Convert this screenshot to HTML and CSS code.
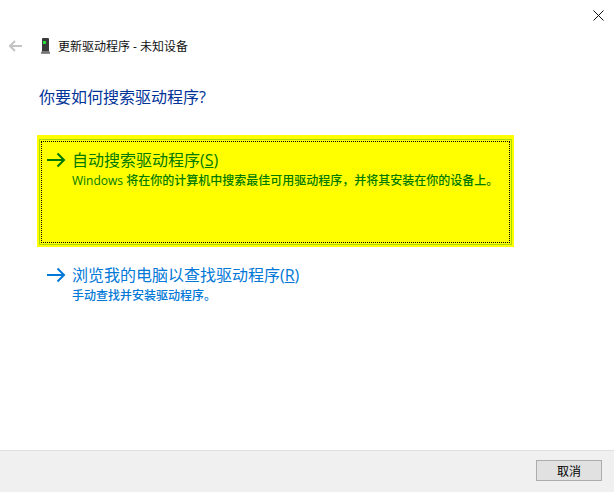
FILE: index.html
```html
<!DOCTYPE html>
<html lang="zh-CN">
<head>
    <meta charset="UTF-8">
    <title>更新驱动程序 - 未知设备</title>
    <link rel="stylesheet" href="styles.css">
</head>
<body>
    <div class="window">
        <div class="close-row">
            <svg class="close-icon" width="11" height="11" viewBox="0 0 11 11">
                <path d="M.5.5l10 10M10.500.5l-10 10" stroke="#111" stroke-width="1" fill="none"/>
            </svg>
        </div>

        <div class="title-row">
            <svg class="back-icon" width="13" height="12" viewBox="0 0 13 12">
                <path d="M6 1L1 6l5 5M1 6h12" stroke="#c4c4c4" stroke-width="2" fill="none"/>
            </svg>
            <svg class="device-icon" width="9" height="16" viewBox="0 0 9 16">
                <path d="M1.500 0h6L8 1v12l1 2.500H0L1 13V1z" fill="#3a3a3a"/>
                <path d="M1 13h7l1 2.500H0z" fill="#777"/>
                <rect x="2" y="3" width="3" height="3" fill="#22e03a"/>
            </svg>
            <span class="title-text">更新驱动程序 - 未知设备</span>
        </div>

        <h1 class="heading">你要如何搜索驱动程序?</h1>

        <div class="option option-selected">
            <div class="option-focus">
                <svg class="arrow" width="19" height="16" viewBox="0 0 19 16">
                    <path d="M0 8h17M10.500 1.500L17 8l-6.500 6.500" stroke="currentColor" stroke-width="2" fill="none"/>
                </svg>
                <div class="option-text">
                    <div class="option-title">自动搜索驱动程序(<u>S</u>)</div>
                    <div class="option-desc">Windows 将在你的计算机中搜索最佳可用驱动程序&#65292;并将其安装在你的设备上。</div>
                </div>
            </div>
        </div>

        <div class="option option-link">
            <svg class="arrow" width="19" height="16" viewBox="0 0 19 16">
                <path d="M0 8h17M10.500 1.500L17 8l-6.500 6.500" stroke="currentColor" stroke-width="2" fill="none"/>
            </svg>
            <div class="option-text">
                <div class="option-title">浏览我的电脑以查找驱动程序(<u>R</u>)</div>
                <div class="option-desc">手动查找并安装驱动程序。</div>
            </div>
        </div>

        <div class="footer">
            <button class="cancel-button">取消</button>
        </div>
    </div>
</body>
</html>
```

FILE: styles.css
```css
html, body {
    margin: 0;
    padding: 0;
    background: #fff;
}

body {
    font-family: "Open Sans", "Noto Sans CJK SC", sans-serif;
    font-size: 12px;
    overflow: hidden;
}

.window {
    width: 614px;
    height: 492px;
    display: flex;
    flex-direction: column;
}

.close-row {
    display: flex;
    justify-content: flex-end;
    padding: 10px 10px 0 0;
    height: 26px;
}

.close-icon { display: block; }

.title-row {
    display: flex;
    align-items: center;
    height: 20px;
    padding-left: 9px;
    color: #111;
}

.back-icon { margin-right: 19px; }
.device-icon { margin-right: 8px; }

.heading {
    margin: 29px 0 0 39px;
    font-size: 16px;
    font-weight: 400;
    line-height: 24px;
    color: #003399;
}

.option {
    display: flex;
    color: #0078d7;
}

.option-selected {
    box-sizing: border-box;
    width: 477px;
    height: 112px;
    margin: 26px 0 0 37px;
    padding: 2px;
    background: #ff0;
    color: #007a00;
    border-top: 2px solid #ff0;
}

.option-focus {
    flex: 1;
    display: flex;
    padding: 8px 0 0 7px;
    border: 1px solid #a8dc00;
    outline: 1px dotted #000;
    outline-offset: -3px;
}

.option-link {
    margin: 16px 0 0 47px;
}

.arrow {
    flex: none;
    margin: 4px 6px 0 0;
}

.option-title {
    font-size: 16px;
    line-height: 25px;
}

.option-desc {
    font-size: 12px;
    line-height: 16px;
    font-weight: 500;
}

.footer {
    margin-top: auto;
    height: 42px;
    background: #f0f0f0;
    border-top: 1px solid #dfdfdf;
    display: flex;
    justify-content: flex-end;
    align-items: flex-start;
    padding: 9px 12px 0 0;
    box-sizing: border-box;
}

.cancel-button {
    width: 66px;
    height: 21px;
    padding: 0;
    background: #e1e1e1;
    border: 1px solid #adadad;
    font-family: inherit;
    font-size: 12px;
    color: #000;
}
```
